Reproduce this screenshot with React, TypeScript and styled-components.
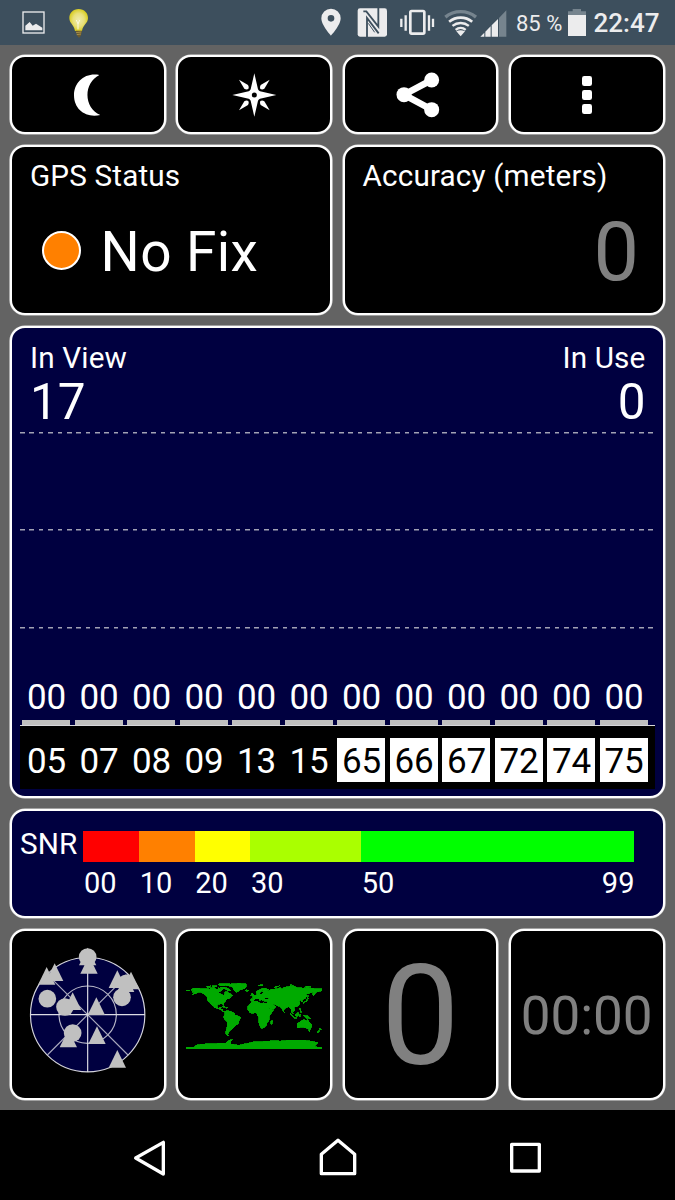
import React from "react";
import styled, { createGlobalStyle } from "styled-components";

const GlobalStyle = createGlobalStyle`
  html, body { margin: 0; padding: 0; background: #000; }
  body { width: 675px; height: 1200px; overflow: hidden; font-family: Roboto, sans-serif; color: #fff; }
  * { box-sizing: border-box; }
  svg { display: block; flex: none; }
`;

const Screen = styled.div`
  width: 675px;
  height: 1200px;
  display: flex;
  flex-direction: column;
  background: #636363;
`;

const StatusBar = styled.header`
  height: 45px;
  display: flex;
  align-items: flex-start;
  background: #3d4f5d;
  color: #ececed;
`;

const Slot = styled.div<{ $gap: number }>`
  margin-left: ${(p) => p.$gap}px;
`;

const BatteryText = styled.span`
  width: 48px;
  margin-left: 9px;
  font-size: 22px;
  line-height: 47px;
  white-space: nowrap;
`;

const Clock = styled.span`
  margin-left: 6.5px;
  font-size: 26px;
  font-weight: 500;
  line-height: 47px;
  white-space: nowrap;
`;

const Dashboard = styled.main`
  flex: 1;
  display: grid;
  grid-template-columns: repeat(4, 1fr);
  grid-template-rows: 79px 170px 472px 109px 171px;
  gap: 11px 10.5px;
  padding: 10px 10.5px 10px 10px;
`;

const Card = styled.section<{ $span?: number; $navy?: boolean }>`
  grid-column: span ${(p) => p.$span ?? 1};
  min-width: 0;
  border: 2px solid #fff;
  border-radius: 15px;
  box-shadow: 0 0 0 0.6px #e0e0e0;
  background: ${(p) => (p.$navy ? "#000040" : "#000")};
`;

const CenterCard = styled(Card)`
  display: flex;
  align-items: center;
  justify-content: center;
`;

const Label = styled.div`
  font-size: 29.7px;
  line-height: 30px;
  letter-spacing: 0.15px;
  white-space: nowrap;
`;

const StatusCard = styled(Card)`
  padding: 14px 18px;
`;

const StatusRow = styled.div`
  display: flex;
  align-items: center;
  gap: 19.5px;
  margin: 33px 0 0 12px;
`;

const Dot = styled.span`
  width: 39px;
  height: 39px;
  margin-bottom: 3px;
  border: 2px solid #fff;
  border-radius: 50%;
  background: #ff8000;
`;

const StatusText = styled.span`
  font-size: 55px;
  line-height: 56px;
  letter-spacing: 0.4px;
  white-space: nowrap;
`;

const AccuracyValue = styled.div`
  margin: 20px 5.5px 0 0;
  text-align: right;
  font-size: 81px;
  line-height: 84px;
  color: #808080;
`;

const ChartCard = styled(Card)`
  padding: 0 7.5px 0 8px;
`;

const ChartHeader = styled.div`
  height: 103.5px;
  padding: 15px 9.5px 0 10px;
  display: flex;
  justify-content: space-between;
`;

const Counter = styled.div<{ $right?: boolean }>`
  text-align: ${(p) => (p.$right ? "right" : "left")};
`;

const CounterValue = styled.div`
  margin-top: 3px;
  font-size: 49.5px;
  line-height: 53px;
`;

const Band = styled.div<{ $h: number }>`
  height: ${(p) => p.$h}px;
  display: flex;
  flex-direction: column;
  justify-content: flex-end;
  background: repeating-linear-gradient(90deg, #a2a2b4 0 4.69px, transparent 4.69px 9.38px) 0 0 / 633px 1.5px no-repeat;
`;

const Columns = styled.div`
  display: grid;
  grid-template-columns: repeat(12, 48.2px);
  column-gap: 4.32px;
  padding-left: 2.3px;
`;

const Signal = styled.div`
  text-align: center;
  font-size: 35px;
  line-height: 36px;
  letter-spacing: -0.2px;
`;

const Bar = styled.div`
  height: 5px;
  margin-top: 4px;
  background: #c0c0c0;
`;

const Axis = styled.div`
  height: 1px;
  background: #d8d8dc;
`;

const IdPanel = styled.div`
  height: 63px;
  padding-top: 12.5px;
  background: #000;
`;

const SatId = styled.div<{ $inverse: boolean }>`
  height: 44px;
  text-align: center;
  font-size: 35px;
  line-height: 47.5px;
  letter-spacing: -0.2px;
  background: ${(p) => (p.$inverse ? "#fff" : "#000")};
  color: ${(p) => (p.$inverse ? "#000" : "#fff")};
`;

const LegendCard = styled(Card)`
  display: flex;
  padding: 20px 0 0 8px;
`;

const LegendTitle = styled(Label)`
  width: 63.3px;
  margin-top: -2px;
  line-height: 30px;
`;

const LegendScale = styled.div`
  display: grid;
  grid-template-columns: 55.8px 55.6px 55.6px 110.8px 273.4px;
  grid-template-rows: 30.5px 40px;
`;

const Swatch = styled.div<{ $color: string }>`
  background: ${(p) => p.$color};
`;

const LegendLabel = styled(Label)`
  display: flex;
  justify-content: space-between;
  padding: 6px 0 0 0.6px;
  font-size: 29px;
  letter-spacing: 0;
`;

const BigZero = styled.span`
  font-size: 140px;
  line-height: 160px;
  padding-top: 3px;
  color: #808080;
`;

const Timer = styled.span`
  font-size: 53px;
  line-height: 60px;
  padding-top: 2px;
  color: #808080;
`;

const NavBar = styled.nav`
  height: 90px;
  display: flex;
  gap: 152px;
  padding-left: 131px;
  background: #000;
`;

/* Icons drawn on a 3-units-per-pixel grid. */
function Icon({ box, children }: { box: [number, number, number, number]; children: React.ReactNode }) {
  return (
    <svg width={box[2] / 3} height={box[3] / 3} viewBox={box.join(" ")} fill="none">
      {children}
    </svg>
  );
}

const LIGHT = "#ececed";
const DIM = "#76848e";

const arc = (r: number, deg: number) => {
  const a = (deg * Math.PI) / 180;
  const dx = r * Math.sin(a);
  const y = 108 - r * Math.cos(a);
  return `M${452 - dx} ${y}A${r} ${r} 0 0 1 ${452 + dx} ${y}`;
};

function StatusIcons() {
  return (
    <>
      <Slot $gap={21}>
        <Icon box={[63, 0, 75, 135]}>
          <rect x="69" y="36" width="63" height="63" stroke={LIGHT} strokeWidth="4" />
          <path d="M76 91V77L89 66L98 77L108 71L127 83V91Z" fill={LIGHT} />
        </Icon>
      </Slot>
      <Slot $gap={22}>
        <Icon box={[204, 0, 66, 135]}>
          <defs>
            <radialGradient id="bulb">
              <stop offset="0" stopColor="#efecae" />
              <stop offset="0.6" stopColor="#e8e07a" />
              <stop offset="1" stopColor="#d8cd25" />
            </radialGradient>
          </defs>
          <path d="M236 27C219 27 208 39 208 54C208 70 222 74 225 93H246C249 74 264 70 264 54C264 39 253 27 236 27Z" fill="url(#bulb)" />
          <path d="M229 60L234 72L239 60M234 72V88" stroke="#fbfadf" strokeWidth="3" />
          <path d="M227 92H246L243 106L237 114L231 106Z" fill="#6c5a2c" />
          <path d="M228 98L244 96M230 104L243 102" stroke="#c0a95c" strokeWidth="2" />
        </Icon>
      </Slot>
      <Slot $gap={230}>
        <Icon box={[960, 0, 66, 135]}>
          <path
            fillRule="evenodd"
            d="M993 107C993 107 964 76 964 55A29 29 0 0 1 1022 55C1022 76 993 107 993 107ZM993 45A10 10 0 1 0 993 65A10 10 0 1 0 993 45Z"
            fill={LIGHT}
          />
        </Icon>
      </Slot>
      <Slot $gap={14}>
        <Icon box={[138, 0, 99, 135]}>
          <rect x="143" y="25" width="88" height="85" rx="7" fill={LIGHT} />
          <path d="M171 112V54L206 100M205 22V80L169 34L160 34" stroke="#3d4f5d" strokeWidth="5.5" />
          <path d="M175 70L194 97" stroke="#3d4f5d" strokeWidth="3" />
        </Icon>
      </Slot>
      <Slot $gap={10}>
        <Icon box={[267, 0, 108, 135]}>
          <rect x="301" y="33" width="42" height="68" rx="4" stroke={LIGHT} strokeWidth="8" />
          <path d="M287 46V92M274 56V81M357 46V92M369 56V81" stroke={LIGHT} strokeWidth="7" />
        </Icon>
      </Slot>
      <Slot $gap={8}>
        <Icon box={[399, 0, 105, 135]}>
          <path d={arc(73, 39)} stroke={DIM} strokeWidth="10" />
          <path d={arc(55, 39)} stroke={LIGHT} strokeWidth="8" />
          <path d={arc(39, 39)} stroke={LIGHT} strokeWidth="7" />
          <path d={arc(24, 39)} stroke={LIGHT} strokeWidth="7" />
          <path d="M452 109L439 94Q452 87 465 94Z" fill={LIGHT} />
        </Icon>
      </Slot>
      <Slot $gap={1}>
        <Icon box={[507, 0, 84, 135]}>
          <path d="M511 110L523 98V110ZM526 95L542 79V110H526ZM545 76L564 57V110H545Z" fill={LIGHT} />
          <path d="M567 54L589 31V110H567Z" fill={DIM} />
        </Icon>
      </Slot>
      <BatteryText>85 %</BatteryText>
      <Slot $gap={3}>
        <Icon box={[771, 0, 60, 135]}>
          <path d="M788 27H813V34H828V46H774V34H788Z" fill={DIM} />
          <rect x="774" y="45" width="54" height="63" fill={LIGHT} />
        </Icon>
      </Slot>
    </>
  );
}

function MoonIcon() {
  return (
    <Icon box={[198, 218, 132, 132]}>
      <path d="M298 224C255 216 222 245 222 285C222 328 258 354 301 344C250 322 250 248 298 224Z" fill="#fff" />
    </Icon>
  );
}

function CompassIcon() {
  return (
    <Icon box={[695, 218, 135, 132]}>
      <path d="M762 219L773 267Q775 272 779 273L828 284L779 295Q775 296 773 301L762 349L751 301Q749 296 745 295L696 284L745 273Q749 272 751 267Z" fill="#fff" />
      {[0, 90, 180, 270].map((a) => (
        <path key={a} transform={`rotate(${a} 762 284)`} d="M716 238L743 254Q747 260 744 266Q738 269 732 265Z" fill="#fff" />
      ))}
      <circle cx="762" cy="284" r="7.5" fill="#000" />
    </Icon>
  );
}

function ShareIcon() {
  return (
    <Icon box={[255, 215, 150, 138]}>
      <path d="M365 239L282 283L365 328" stroke="#fff" strokeWidth="20" />
      <circle cx="365" cy="239" r="22.5" fill="#fff" />
      <circle cx="282" cy="283" r="22.5" fill="#fff" />
      <circle cx="365" cy="328" r="22.5" fill="#fff" />
    </Icon>
  );
}

function MenuIcon() {
  return (
    <Icon box={[813, 225, 36, 120]}>
      {[228, 270, 312].map((y) => (
        <rect key={y} x="816" y={y} width="30" height="30" rx="7" fill="#fff" />
      ))}
    </Icon>
  );
}

const skyTriangles: [number, number][] = [
  [110, 178], [134, 167], [237, 145], [233, 120], [322, 188], [347, 200], [363, 192],
  [188, 254], [259, 269], [261, 356], [322, 427], [175, 366],
];
const skyCircles: [number, number][] = [[233, 95], [112, 220], [165, 245], [188, 323], [336, 216], [349, 174]];

function SkyView() {
  return (
    <Icon box={[54, 62, 360, 412]}>
      <circle cx="233" cy="268" r="171.5" fill="#000040" stroke="#d4d4dc" strokeWidth="3.5" />
      <circle cx="233" cy="268" r="86" stroke="#b8b8c8" strokeWidth="3.5" />
      <path d="M112 147L354 389M354 147L112 389" stroke="#a8a8bc" strokeWidth="3.5" />
      <path d="M61 268H405M233 96V440" stroke="#dcdce4" strokeWidth="3.5" />
      {skyTriangles.map(([x, y]) => (
        <path key={`${x}-${y}`} d={`M${x} ${y - 53}L${x + 26} ${y}H${x - 26}Z`} fill="#c0c0c0" />
      ))}
      {skyCircles.map(([x, y]) => (
        <circle key={`${x}-${y}`} cx={x} cy={y} r="26.5" fill="#c0c0c0" />
      ))}
    </Icon>
  );
}

/* Land outlines as longitude, latitude pairs. */
const land = [
  "-168,66 -162,70 -156,71 -141,70 -128,70 -115,68 -108,68 -96,68 -94,72 -86,68 -82,68 -86,64 -94,60 -93,58 -85,55 -80,51 -78,56 -77,62 -70,61 -65,58 -60,54 -56,52 -60,50 -66,50 -60,46 -66,44 -70,43 -74,40 -76,35 -81,31 -80,26 -82,27 -84,30 -90,29 -97,28 -97,22 -94,18 -90,21 -87,21 -88,16 -83,15 -83,10 -78,9 -77,8 -82,8 -87,13 -94,16 -105,20 -110,26 -113,31 -109,23 -112,26 -117,33 -121,35 -124,40 -124,48 -131,55 -140,60 -148,60 -154,57 -164,54 -158,59 -165,61 -161,65",
  "-73,78 -60,82 -40,84 -20,82 -20,75 -25,70 -40,65 -44,60 -50,62 -54,68 -58,75",
  "-90,73 -80,74 -68,70 -62,66 -65,63 -72,65 -74,68 -86,70",
  "-118,72 -105,73 -102,69 -115,69", "-125,76 -115,77 -116,74 -124,72", "-95,82 -70,83 -62,82 -80,77 -90,77", "-112,77 -98,77 -98,75 -110,75",
  "-77,8 -72,12 -62,10 -52,5 -50,0 -44,-2 -35,-6 -39,-14 -41,-22 -48,-27 -54,-34 -58,-38 -62,-40 -65,-43 -67,-48 -69,-52 -66,-55 -72,-54 -75,-48 -73,-38 -71,-30 -70,-18 -76,-14 -81,-5 -78,1",
  "-17,15 -16,23 -10,30 -6,35 2,37 10,37 11,33 20,31 24,32 32,31 35,27 39,18 43,12 51,12 46,4 40,-3 40,-14 35,-20 33,-27 27,-34 19,-35 15,-27 12,-17 13,-8 9,-1 9,4 3,6 -8,4 -13,9",
  "44,-25 47,-25 50,-15 47,-14 44,-18",
  "-9,37 -9,43 -1,44 -4,48 3,51 8,54 8,57 11,58 12,55 20,55 24,59 30,60 22,61 25,65 22,65 17,61 17,57 13,56 11,59 6,58 5,62 13,66 20,70 28,71 40,67 34,65 40,64 45,68 60,69 70,73 73,68 80,73 95,76 105,77 113,73 130,71 140,73 160,70 180,69 180,65 177,63 170,62 163,60 162,55 157,51 155,57 163,62 150,59 137,54 141,51 135,43 128,40 129,36 126,34 125,39 121,39 119,36 122,31 118,24 109,21 105,19 109,13 105,9 100,13 104,2 98,8 98,16 91,22 86,20 80,14 78,8 73,19 69,22 62,25 51,29 48,30 52,25 59,22 52,16 44,13 39,21 34,29 36,36 27,37 27,41 36,42 41,42 37,46 30,46 28,42 23,37 20,40 13,46 18,41 16,38 12,43 4,43 0,39 -5,36",
  "-6,50 1,51 -2,56 -6,58 -4,54", "-10,52 -6,52 -6,55 -9,54", "-24,64 -18,63 -14,65 -20,67",
  "11,79 25,80 22,77 14,77", "52,71 57,76 68,77 57,73", "96,80 104,79 96,78", "137,76 150,75 140,73",
  "130,31 135,34 140,36 142,43 145,44 140,42 138,37 131,34", "142,46 144,49 142,54",
  "95,5 100,2 106,-6 102,-4", "105,-6 115,-8 114,-9 106,-8", "109,1 117,7 119,1 115,-4 110,-2", "119,1 125,2 122,-1 123,-5 120,-5",
  "120,18 122,18 124,12 126,7 122,8 122,13", "131,-1 141,-2 150,-10 143,-9 138,-8", "80,9 82,7 80,6",
  "114,-22 114,-34 124,-33 131,-32 138,-35 146,-39 150,-37 153,-30 153,-25 146,-18 142,-11 140,-17 136,-12 131,-12 125,-15 122,-18",
  "145,-41 148,-41 147,-44", "173,-35 178,-38 175,-41", "172,-41 174,-42 169,-47 167,-46",
  "-85,22 -75,20 -78,23", "-74,20 -68,19 -73,18", "-180,66 -172,66 -170,64 -180,65",
  "-180,-90 -180,-86 -160,-86 -153,-80 -135,-77 -110,-76 -90,-75 -75,-75 -68,-68 -57,-64 -62,-72 -62,-77 -40,-80 -22,-76 0,-71 30,-70 50,-68 70,-69 90,-67 110,-67 135,-67 155,-70 170,-73 165,-78 160,-84 180,-86 180,-90",
];

function WorldMap() {
  return (
    <svg width="136" height="68" viewBox="-180 -90 360 180" shapeRendering="crispEdges">
      <g transform="scale(1 -1)" fill="#00aa00" stroke="#00aa00" strokeWidth="2.2">
        {land.map((points) => (
          <polygon key={points} points={points} />
        ))}
      </g>
    </svg>
  );
}

const satellites = ["05", "07", "08", "09", "13", "15", "65", "66", "67", "72", "74", "75"];
const legend = [
  { from: "00", color: "#ff0000" },
  { from: "10", color: "#ff8000" },
  { from: "20", color: "#ffff00" },
  { from: "30", color: "#aaff00" },
  { from: "50", to: "99", color: "#00ff00" },
];

export default function App() {
  return (
    <>
      <GlobalStyle />
      <Screen>
        <StatusBar>
          <StatusIcons />
          <Clock>22:47</Clock>
        </StatusBar>
        <Dashboard>
          <CenterCard><MoonIcon /></CenterCard>
          <CenterCard><CompassIcon /></CenterCard>
          <CenterCard><ShareIcon /></CenterCard>
          <CenterCard><MenuIcon /></CenterCard>

          <StatusCard $span={2}>
            <Label>GPS Status</Label>
            <StatusRow>
              <Dot />
              <StatusText>No Fix</StatusText>
            </StatusRow>
          </StatusCard>
          <StatusCard $span={2}>
            <Label>Accuracy (meters)</Label>
            <AccuracyValue>0</AccuracyValue>
          </StatusCard>

          <ChartCard $span={4} $navy>
            <ChartHeader>
              <Counter>
                <Label>In View</Label>
                <CounterValue>17</CounterValue>
              </Counter>
              <Counter $right>
                <Label>In Use</Label>
                <CounterValue>0</CounterValue>
              </Counter>
            </ChartHeader>
            <Band $h={97.5} />
            <Band $h={97.5} />
            <Band $h={98}>
              <Columns>
                {satellites.map((id) => (
                  <div key={id}>
                    <Signal>00</Signal>
                    <Bar />
                  </div>
                ))}
              </Columns>
            </Band>
            <Axis />
            <IdPanel>
              <Columns>
                {satellites.map((id) => (
                  <SatId key={id} $inverse={Number(id) >= 65}>{id}</SatId>
                ))}
              </Columns>
            </IdPanel>
          </ChartCard>

          <LegendCard $span={4} $navy>
            <LegendTitle>SNR</LegendTitle>
            <LegendScale>
              {legend.map((s) => <Swatch key={s.from} $color={s.color} />)}
              {legend.map((s) => (
                <LegendLabel key={s.from}>
                  <span>{s.from}</span>
                  {s.to && <span>{s.to}</span>}
                </LegendLabel>
              ))}
            </LegendScale>
          </LegendCard>

          <CenterCard><SkyView /></CenterCard>
          <CenterCard><WorldMap /></CenterCard>
          <CenterCard><BigZero>0</BigZero></CenterCard>
          <CenterCard><Timer>00:00</Timer></CenterCard>
        </Dashboard>
        <NavBar>
          <Icon box={[93, 30, 108, 270]}>
            <path d="M107 174L190 127V222Z" stroke="#fff" strokeWidth="10" strokeLinejoin="round" />
          </Icon>
          <Icon box={[657, 30, 114, 270]}>
            <path d="M714 121L764 163V221H664V163Z" stroke="#fff" strokeWidth="10" strokeLinejoin="round" />
          </Icon>
          <Icon box={[1227, 30, 108, 270]}>
            <rect x="1235" y="133" width="83" height="80" stroke="#fff" strokeWidth="10" strokeLinejoin="round" />
          </Icon>
        </NavBar>
      </Screen>
    </>
  );
}
